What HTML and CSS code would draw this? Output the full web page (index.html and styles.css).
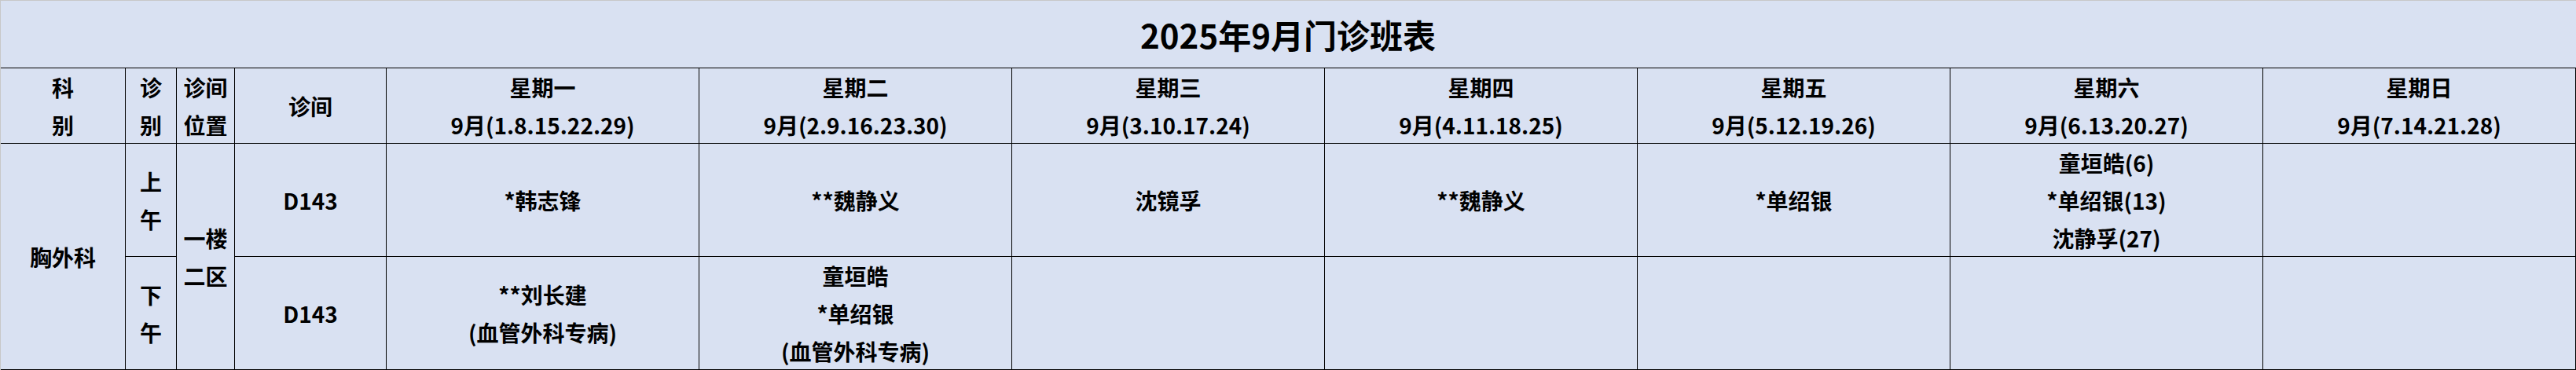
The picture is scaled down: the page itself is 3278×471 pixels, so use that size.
FILE: index.html
```html
<!DOCTYPE html>
<html lang="zh-CN">
<head>
<meta charset="utf-8">
<title>2025年9月门诊班表</title>
<link rel="stylesheet" href="styles.css">
</head>
<body>
<div class="sheet">
  <div class="title">2025年9月门诊班表</div>
  <div class="grid">
    <div class="cell">科<br>别</div>
    <div class="cell">诊<br>别</div>
    <div class="cell">诊间<br>位置</div>
    <div class="cell">诊间</div>
    <div class="cell">星期一<br>9月(1.8.15.22.29)</div>
    <div class="cell">星期二<br>9月(2.9.16.23.30)</div>
    <div class="cell">星期三<br>9月(3.10.17.24)</div>
    <div class="cell">星期四<br>9月(4.11.18.25)</div>
    <div class="cell">星期五<br>9月(5.12.19.26)</div>
    <div class="cell">星期六<br>9月(6.13.20.27)</div>
    <div class="cell">星期日<br>9月(7.14.21.28)</div>

    <div class="cell span2">胸外科</div>
    <div class="cell">上<br>午</div>
    <div class="cell span2">一楼<br>二区</div>
    <div class="cell">D143</div>
    <div class="cell">*韩志锋</div>
    <div class="cell">**魏静义</div>
    <div class="cell">沈镜孚</div>
    <div class="cell">**魏静义</div>
    <div class="cell">*单绍银</div>
    <div class="cell">童垣皓(6)<br>*单绍银(13)<br>沈静孚(27)</div>
    <div class="cell"></div>

    <div class="cell">下<br>午</div>
    <div class="cell">D143</div>
    <div class="cell">**刘长建<br>(血管外科专病)</div>
    <div class="cell">童垣皓<br>*单绍银<br>(血管外科专病)</div>
    <div class="cell"></div>
    <div class="cell"></div>
    <div class="cell"></div>
    <div class="cell"></div>
    <div class="cell"></div>
  </div>
</div>
</body>
</html>
```

FILE: styles.css
```css
* { box-sizing: border-box; }
html, body {
  margin: 0;
  padding: 0;
  background: #d9e1f2;
}
.sheet {
  width: 3278px;
  height: 471px;
  background: #d9e1f2;
  border-top: 1px solid #c8c8c8;
  border-left: 1px solid #c8c8c8;
  font-family: "Noto Sans CJK SC", "Noto Sans", sans-serif;
  font-weight: 700;
  color: #000;
}
.title {
  height: 85px;
  display: flex;
  align-items: center;
  justify-content: center;
  font-size: 42px;
  line-height: 1;
  padding-right: 1px;
}
.grid {
  display: grid;
  grid-template-columns: 159px 65px 74px 193px repeat(7, 398px);
  grid-template-rows: 96px 144px 144px;
  border-top: 1px solid #000;
  font-size: 28px;
  line-height: 48px;
}
.cell {
  border-right: 1px solid #000;
  border-bottom: 1px solid #000;
  display: flex;
  align-items: center;
  justify-content: center;
  text-align: center;
  white-space: nowrap;
}
.span2 {
  grid-row: span 2;
}
```
